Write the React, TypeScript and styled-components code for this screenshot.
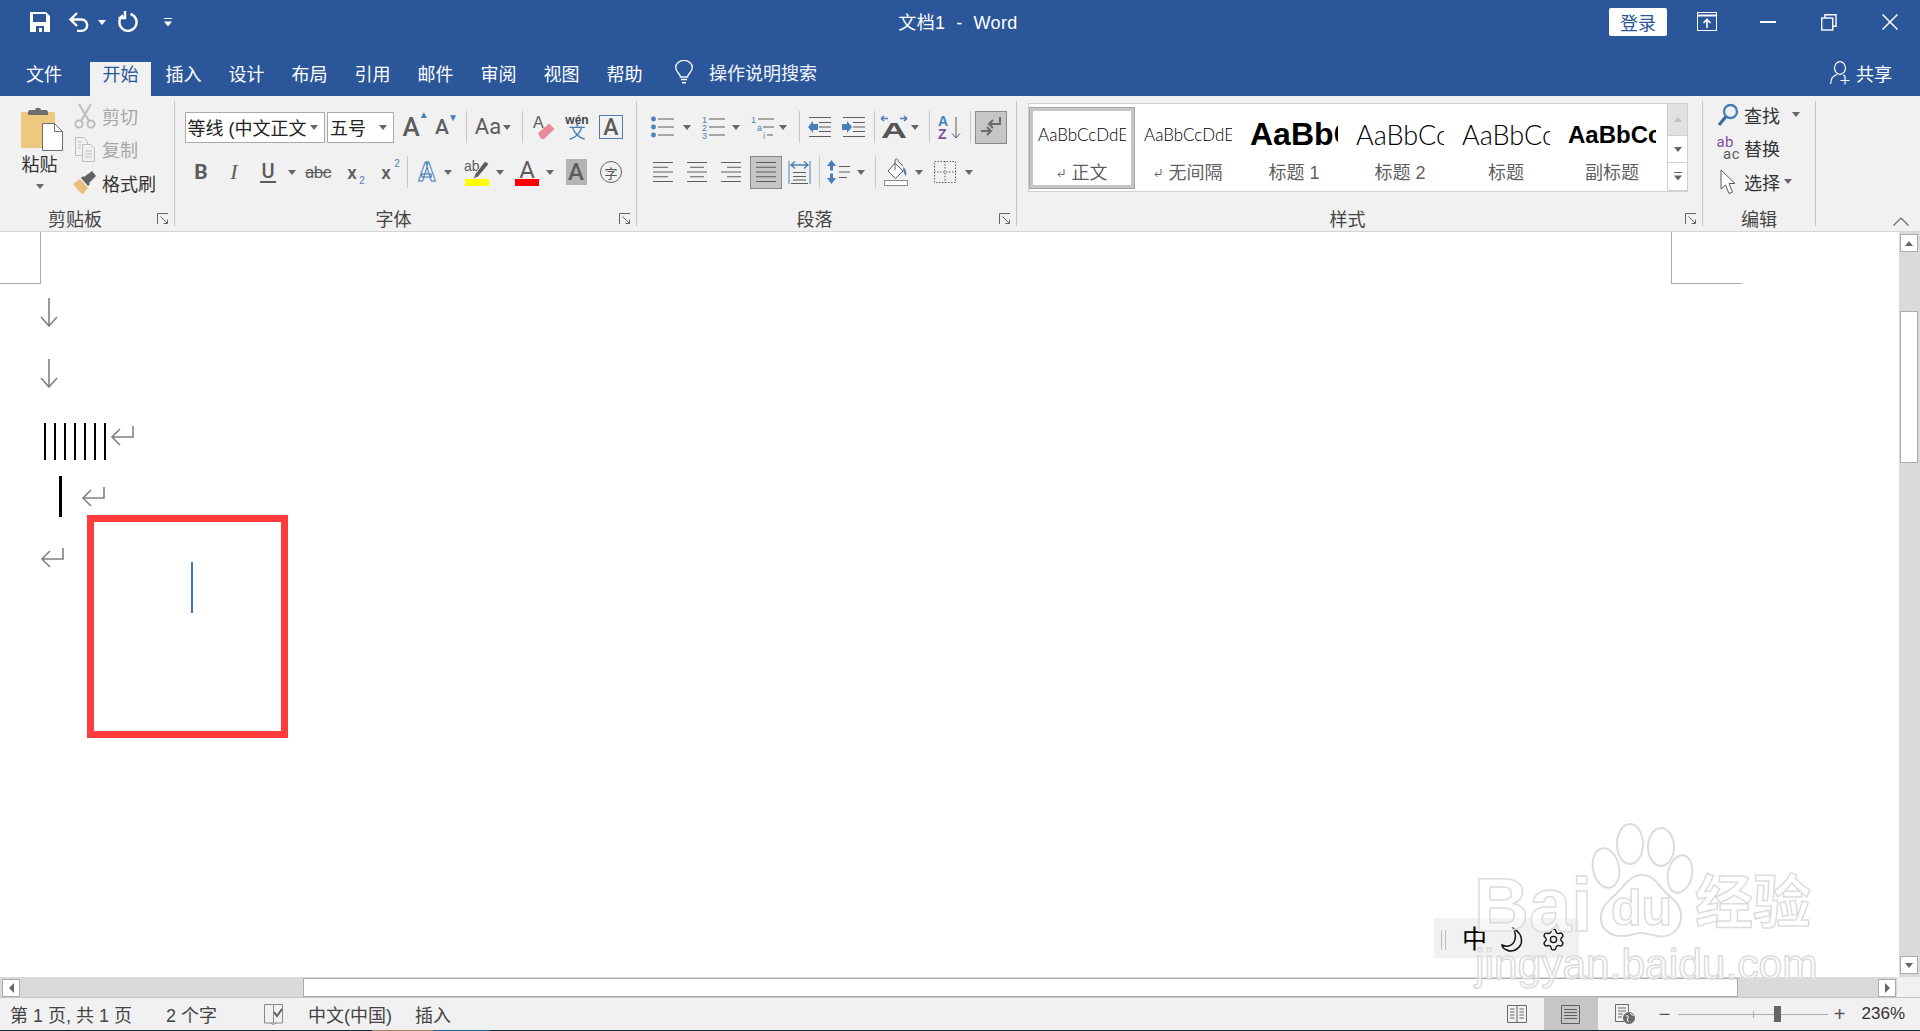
import { ReactNode } from "react";
import styled, { createGlobalStyle } from "styled-components";
import { Settings } from "lucide-react";

const BLUE = "#2b579a";
const ICON_BLUE = "#4a7fb5";
const GREY = "#5c5c5c";
const FACE = "#f1f1f1";

const GlobalStyle = createGlobalStyle`
  html, body { margin: 0; padding: 0; background: #fff; overflow: hidden; }
  * { box-sizing: border-box; }
  body, svg text { font-family: "Liberation Sans", "Noto Sans CJK SC", sans-serif; }
`;

/* ---------- small drawn icons ---------- */

const Caret = ({ color = "#666" }: { color?: string }) => (
  <svg width="8" height="5" viewBox="0 0 8 5"><path d="M0 0h8L4 5z" fill={color} /></svg>
);

const UpCaret = ({ color = "#666" }: { color?: string }) => (
  <svg width="8" height="5" viewBox="0 0 8 5"><path d="M0 5h8L4 0z" fill={color} /></svg>
);

const LeftCaret = () => (
  <svg width="5" height="10" viewBox="0 0 5 10"><path d="M5 0v10L0 5z" fill="#666" /></svg>
);

const RightCaret = () => (
  <svg width="5" height="10" viewBox="0 0 5 10"><path d="M0 0v10l5-5z" fill="#666" /></svg>
);

const MoreCaret = ({ color = "#666" }: { color?: string }) => (
  <svg width="8" height="9" viewBox="0 0 8 9" fill={color}>
    <rect width="8" height="1" />
    <path d="M0 3.5h8L4 8.5z" />
  </svg>
);

const Launcher = () => (
  <svg width="12" height="12" viewBox="0 0 12 12" fill="none" stroke="#666">
    <path d="M.5 11V.5H11" />
    <path d="M3.5 3.5l7 7M6.5 10.5h4v-4" />
  </svg>
);

const ReturnMark = () => (
  <svg width="24" height="20" viewBox="0 0 24 20" fill="none" stroke="#808080" strokeWidth="1.6">
    <path d="M23 0v11H2M10 3l-8 8 8 8" />
  </svg>
);

const DownMark = () => (
  <svg width="18" height="29" viewBox="0 0 18 29" fill="none" stroke="#808080" strokeWidth="1.6">
    <path d="M9 0v28M1 19l8 9 8-9" />
  </svg>
);

const SmallReturn = () => (
  <svg width="8" height="9" viewBox="0 0 8 9" fill="none" stroke="#666">
    <path d="M7 0v5.5H1M3.5 3L1 5.5 3.5 8" />
  </svg>
);

const Paste = () => (
  <svg width="42" height="44" viewBox="0 0 42 44">
    <rect x="0" y="5" width="34" height="36" rx="2" fill="#edc87e" />
    <path d="M7 8V5c0-1 1-2 2-2h5c0-3 6-3 6 0h5c1 0 2 1 2 2v3z" fill="#6e6e6e" />
    <path d="M21.5 16.5h12l8 8v19h-20z" fill="#fff" stroke="#6e6e6e" />
    <path d="M33.5 16.5v8h8" fill="none" stroke="#6e6e6e" />
  </svg>
);

const Scissors = () => (
  <svg width="22" height="26" viewBox="0 0 22 26" fill="none" stroke="#bdbdbd" strokeWidth="2">
    <circle cx="5" cy="21" r="3.6" />
    <circle cx="17" cy="21" r="3.6" />
    <path d="M7 18L17 1M15 18L5 1" />
  </svg>
);

const CopyIcon = () => (
  <svg width="22" height="26" viewBox="0 0 22 26" fill="#f1f1f1" stroke="#bdbdbd">
    <path d="M1.5 1.5h8l4 4v14h-12z" />
    <path d="M8.5 8.5h8l4 4v13h-12z" />
    <path d="M11 15h7M11 18h7M11 21h7M4 6h4M4 9h3M4 12h3" />
  </svg>
);

const Brush = () => (
  <svg width="24" height="24" viewBox="0 0 24 24">
    <path d="M0 13l7-5 8 9-5 6c-3-1-7-6-10-10z" fill="#e8bf78" />
    <path d="M8 7l2-2 7 8-2 2zM11 6l8-6 4 5-7 7z" fill="#5f5f5f" />
  </svg>
);

const Save = () => (
  <svg width="20" height="20" viewBox="0 0 20 20">
    <path fillRule="evenodd" fill="#fff" d="M0 0h16l4 4v16H0zM3 2v8h13V2zM6 14v6h3v-4h3v4h2v-6z" />
  </svg>
);

const Undo = () => (
  <svg width="22" height="22" viewBox="0 0 22 22" fill="none" stroke="#fff" strokeWidth="2.4">
    <path d="M9 2L2.5 8.5 9 15" />
    <path d="M3 8.5h10.5a5.7 5.7 0 0 1 0 11.4H9" />
  </svg>
);

const Redo = () => (
  <svg width="21" height="22" viewBox="0 0 21 22" fill="none" stroke="#fff" strokeWidth="2.4">
    <path d="M6 4.2A8.6 8.6 0 1 0 13.5 3" />
    <path d="M8 0v7H1.5" />
  </svg>
);

const DisplayOptions = () => (
  <svg width="20" height="20" viewBox="0 0 20 20" fill="none" stroke="#fff">
    <rect x=".5" y=".5" width="19" height="18" />
    <path d="M0 3.5h20" strokeWidth="2" />
    <path d="M10 16V8M6.5 11L10 7.5l3.5 3.5" strokeWidth="1.6" />
  </svg>
);

const Minimize = () => (
  <svg width="16" height="2" viewBox="0 0 16 2"><rect width="16" height="2" fill="#fff" /></svg>
);

const Restore = () => (
  <svg width="16" height="17" viewBox="0 0 16 17" fill="none" stroke="#fff" strokeWidth="1.4">
    <rect x=".7" y="4" width="11" height="12" />
    <path d="M4 4V.8h11v11.5h-3.3" />
  </svg>
);

const Close = () => (
  <svg width="16" height="16" viewBox="0 0 16 16" stroke="#fff" strokeWidth="1.5">
    <path d="M.5.5l15 15M15.5.5l-15 15" />
  </svg>
);

const Bulb = () => (
  <svg width="18" height="24" viewBox="0 0 18 24" fill="none" stroke="#fff" strokeWidth="1.4">
    <path d="M5.5 17c0-3-4.8-5-4.8-9.5A8.2 7 0 0 1 17.3 7.5C17.3 12 12.5 14 12.5 17z" />
    <path d="M6 19.5h6M7 22.7h4" />
  </svg>
);

const SharePerson = () => (
  <svg width="20" height="24" viewBox="0 0 20 24" fill="none" stroke="#fff" strokeWidth="1.2">
    <ellipse cx="10" cy="7" rx="5.5" ry="6.3" />
    <path d="M.7 23c0-5 3-8.5 6.5-9.5M13 14l1.5.7M15 14.5v9M10.5 19.5h9" />
  </svg>
);

const ClearFormat = () => (
  <svg width="24" height="26" viewBox="0 0 24 26">
    <text x="1" y="14" fontSize="16" fill={GREY}>A</text>
    <path d="M6 19L17 9.5 22.5 15 12 25H9z" fill="#e98a99" />
  </svg>
);

const HighlightPen = () => (
  <svg width="26" height="22" viewBox="0 0 26 22">
    <text x="0" y="13" fontSize="14" fill={GREY}>ab</text>
    <path d="M9 21l2-5L21 3l4 3-11 13z" fill={GREY} stroke="#f1f1f1" />
  </svg>
);

const Bullets = () => (
  <svg width="24" height="22" viewBox="0 0 24 22">
    <circle cx="2.5" cy="3" r="2.4" fill={ICON_BLUE} />
    <circle cx="2.5" cy="11" r="2.4" fill={ICON_BLUE} />
    <circle cx="2.5" cy="19" r="2.4" fill={ICON_BLUE} />
    <path d="M7 3h16M7 11h16M7 19h16" stroke={GREY} />
  </svg>
);

const Numbered = () => (
  <svg width="24" height="24" viewBox="0 0 24 24">
    <g fill={ICON_BLUE} fontSize="9">
      <text x="0" y="8">1</text>
      <text x="0" y="16">2</text>
      <text x="0" y="24">3</text>
    </g>
    <path d="M7 4h16M7 12h16M7 20h16" stroke={GREY} />
  </svg>
);

const Multilevel = () => (
  <svg width="24" height="24" viewBox="0 0 24 24">
    <g fontSize="9" fill={ICON_BLUE}>
      <text x="0" y="8">1</text>
      <text x="6" y="16">a</text>
      <text x="12" y="24">i</text>
    </g>
    <path d="M7 4h16M12 12h11M16 20h6" stroke={GREY} />
  </svg>
);

const Indent = ({ flip }: { flip?: boolean }) => (
  <svg width="23" height="22" viewBox="0 0 23 22">
    <path d="M1 1.5h22M11 6.5h12M11 11h12M11 15.5h12M1 20.5h22" stroke={GREY} />
    {flip ? (
      <path d="M0 8v6h5v3l5-6-5-6v3z" fill={ICON_BLUE} />
    ) : (
      <path d="M10 8v6H5v3l-5-6 5-6v3z" fill={ICON_BLUE} />
    )}
  </svg>
);

const TextDirection = () => (
  <svg width="28" height="24" viewBox="0 0 28 24">
    <text x="14" y="23" textAnchor="middle" fontSize="22" fontWeight="700" fill="#555" textLength="26" lengthAdjust="spacingAndGlyphs">A</text>
    <path d="M1 3.5h7M1 3.5l3-2.5M1 3.5l3 2.5M27 3.5h-7M27 3.5l-3-2.5M27 3.5l-3 2.5" stroke={ICON_BLUE} strokeWidth="1.6" fill="none" />
  </svg>
);

const Sort = () => (
  <svg width="24" height="26" viewBox="0 0 24 26">
    <text x="0" y="12" fontSize="14" fontWeight="700" fill={ICON_BLUE}>A</text>
    <text x="0" y="25" fontSize="14" fontWeight="700" fill="#7f4ea0">Z</text>
    <path d="M18 3v21M14 19.5l4 4.5 4-4.5" stroke={GREY} fill="none" />
  </svg>
);

const ShowMarks = () => (
  <svg width="22" height="22" viewBox="0 0 22 22" fill="none" stroke="#6a6a6a" strokeWidth="2">
    <path d="M20 1v7H9M13 4L9 8l4 4M1 15h10M7 11l4 4-4 4" />
  </svg>
);

const AlignLines = ({ rows }: { rows: [number, number][] }) => (
  <svg width="22" height="22" viewBox="0 0 22 22" stroke={GREY}>
    {rows.map(([a, b], i) => (
      <path key={i} d={`M${a} ${1.5 + i * 4.75}H${b}`} />
    ))}
  </svg>
);

const Distributed = () => (
  <svg width="23" height="24" viewBox="0 0 23 24">
    <path d="M5 12.5h13M5 16.5h13M5 20h13M3 23.5h17" stroke={GREY} />
    <path d="M1 1v23M22 1v23" stroke={ICON_BLUE} />
    <path d="M3 5h17M7 1.5L3 5l4 3.5M16 1.5L20 5l-4 3.5" stroke={ICON_BLUE} strokeWidth="1.4" fill="none" />
  </svg>
);

const LineSpacing = () => (
  <svg width="24" height="24" viewBox="0 0 24 24">
    <path d="M12 6.5h11M12 12h11M12 17.5h8" stroke={GREY} />
    <path d="M4.5 0L9 6H6v4.5H3V6H0zM4.5 24L9 18H6v-4.5H3V18H0z" fill={ICON_BLUE} />
  </svg>
);

const Shading = () => (
  <svg width="25" height="28" viewBox="0 0 25 28" fill="none">
    <path d="M11 5l8 8-7.5 7.5L4 13z" fill="#fff" stroke={GREY} />
    <path d="M11 12V2c1-2 3-1 3 1l5 5" stroke={GREY} />
    <path d="M19 9c3 2 4 6 3 9-2-2-3-5-3-9z" fill={ICON_BLUE} />
    <rect x=".5" y="22.5" width="23" height="5" fill="#fff" stroke="#8a8a8a" />
  </svg>
);

const Borders = () => (
  <svg width="22" height="22" viewBox="0 0 22 22" fill="none" stroke={GREY} strokeDasharray="1.5 1.5">
    <rect x=".5" y=".5" width="21" height="21" />
    <path d="M11 0v22M0 11h22" />
  </svg>
);

const Magnifier = () => (
  <svg width="22" height="24" viewBox="0 0 22 24" fill="none" stroke={ICON_BLUE}>
    <circle cx="13.5" cy="8.5" r="6.5" strokeWidth="2.4" />
    <path d="M9 13.5L2 22" strokeWidth="3.2" stroke="#3f6b99" />
  </svg>
);

const Pointer = () => (
  <svg width="16" height="26" viewBox="0 0 16 26" fill="#fff" stroke={GREY}>
    <path d="M1 1v19l4.5-4 3.5 8.5 3.5-1.5-3.5-8.5h6z" />
  </svg>
);

const ProofIcon = () => (
  <svg width="20" height="22" viewBox="0 0 20 22" fill="none" stroke="#8a8a8a">
    <path d="M9.5 20H.5V1.5h9zM9.5 1.5h9V20h-9M6.5 20l3 1.5 3-1.5" />
    <path d="M10 9l3 4 5-7" stroke="#5f5f5f" strokeWidth="2" />
  </svg>
);

const ReadView = () => (
  <svg width="20" height="20" viewBox="0 0 20 20" fill="none" stroke="#6a6a6a">
    <path d="M.5 1.5h19v17H.5zM10 1.5v17M3 5h4.5M3 8h4.5M3 11h4.5M3 14h4.5M12.5 5H17M12.5 8H17M12.5 11H17M12.5 14H17" />
  </svg>
);

const PrintView = () => (
  <svg width="19" height="19" viewBox="0 0 19 19" fill="none" stroke="#5f5f5f">
    <path d="M.5.5h18v18H.5zM3 4.5h13M3 7.5h13M3 10.5h13M3 13.5h13" />
  </svg>
);

const WebView = () => (
  <svg width="20" height="20" viewBox="0 0 20 20" fill="none" stroke="#6a6a6a">
    <path d="M9 17.5H.5V.5h13v7M3 4h8M3 7h8M3 10h5M3 13h4" />
    <circle cx="14" cy="14" r="5.5" fill="#6a6a6a" />
    <path d="M11 12c2-1 3 1 2 2s-1 3 1 4M15 9c1 2 4 2 4 3" stroke="#fff" />
  </svg>
);

const Moon = () => (
  <svg width="24" height="26" viewBox="0 0 24 26" fill="none" stroke="#111" strokeWidth="1.5">
    <path d="M12 1c6 3 10 9 8 16-2 5-9 9-14 6-3-1-5-3-5-5 6 3 12 0 13-6 1-4 0-8-2-11z" />
  </svg>
);

const Paw = () => (
  <svg width="120" height="120" viewBox="0 0 120 120" fill="none" stroke="#dcdcdc" strokeWidth="2">
    <ellipse cx="24" cy="46" rx="13" ry="20" transform="rotate(-12 24 46)" />
    <ellipse cx="48" cy="22" rx="13" ry="20" />
    <ellipse cx="79" cy="25" rx="13" ry="19" />
    <ellipse cx="98" cy="52" rx="12" ry="19" transform="rotate(12 98 52)" />
    <path d="M60 53c12 0 16 10 24 18 8 7 16 13 15 25-1 14-13 20-24 18-6-1-10-3-16-3s-11 3-18 3c-11 1-23-6-22-19 0-11 8-16 15-23 8-7 13-19 26-19z" />
  </svg>
);

/* ---------- title bar and tabs ---------- */

const Shell = styled.div`
  display: flex;
  flex-direction: column;
  width: 1920px;
  height: 1031px;
  overflow: hidden;
  background: #fff;
`;

const Header = styled.header`
  background: ${BLUE};
  color: #fff;
`;

const TitleBar = styled.div`
  position: relative;
  display: flex;
  align-items: center;
  height: 50px;
  padding: 0 0 6px 30px;
`;

const Qat = styled.div<{ $ml?: number }>`
  display: flex;
  align-items: center;
  margin-left: ${(p) => p.$ml ?? 0}px;
`;

const DocTitle = styled.div`
  position: absolute;
  left: 0;
  right: 4px;
  top: 13px;
  text-align: center;
  font-size: 18px;
  letter-spacing: 0.4px;
  line-height: 20px;
  white-space: pre;
`;

const WindowTools = styled.div`
  display: flex;
  align-items: center;
  margin-left: auto;
  height: 100%;
`;

const SignIn = styled.div`
  display: flex;
  align-items: center;
  justify-content: center;
  width: 58px;
  height: 28px;
  margin-right: 9px;
  border-radius: 2px;
  background: #fff;
  color: ${BLUE};
  font-size: 18px;
`;

const WindowButton = styled.div`
  display: flex;
  align-items: center;
  justify-content: center;
  width: 61px;
  height: 100%;
`;

const TabBar = styled.nav`
  display: flex;
  align-items: flex-end;
  height: 46px;
  padding-left: 26px;
`;

const Tab = styled.div<{ $active?: boolean; $file?: boolean }>`
  display: flex;
  align-items: center;
  justify-content: center;
  height: 34px;
  padding: ${(p) => (p.$file ? "0" : "0 12.5px")};
  margin-right: ${(p) => (p.$file ? "28px" : "2px")};
  padding-bottom: 12px;
  font-size: 18px;
  background: ${(p) => (p.$active ? FACE : "transparent")};
  color: ${(p) => (p.$active ? BLUE : "#fff")};
`;

const SearchHint = styled.div`
  display: flex;
  align-items: center;
  gap: 16px;
  height: 34px;
  margin-left: 18px;
  padding-bottom: 14px;
  font-size: 18px;
  opacity: 0.95;
`;

const Share = styled.div`
  display: flex;
  align-items: center;
  gap: 6px;
  height: 34px;
  margin-left: auto;
  margin-right: 28px;
  padding-bottom: 12px;
  font-size: 18px;
`;

/* ---------- ribbon ---------- */

const Ribbon = styled.section`
  display: flex;
  flex-shrink: 0;
  height: 136px;
  background: ${FACE};
  border-bottom: 1px solid #d4d4d4;
`;

const Group = styled.div<{ $w: number }>`
  display: flex;
  flex-direction: column;
  flex-shrink: 0;
  width: ${(p) => p.$w}px;
`;

const GroupBody = styled.div`
  flex: 1;
  min-height: 0;
`;

const GroupSep = styled.div`
  flex-shrink: 0;
  width: 1px;
  margin: 5px 0;
  background: #c6c6c6;
`;

const LabelRow = styled.div`
  display: flex;
  align-items: center;
  height: 26px;
  color: #444;
  font-size: 18px;
`;

const GroupLabel = styled.div`
  flex: 1;
  text-align: center;
`;

const LauncherBox = styled.div`
  display: flex;
  justify-content: flex-end;
  width: 24px;
  padding: 2px 5px 0 0;
`;

const GroupFooter = ({ title, launcher = true }: { title: string; launcher?: boolean }) => (
  <LabelRow>
    <GroupLabel>{title}</GroupLabel>
    {launcher && (
      <LauncherBox>
        <Launcher />
      </LauncherBox>
    )}
  </LabelRow>
);

const ClipboardBody = styled(GroupBody)`
  display: flex;
`;

const PasteColumn = styled.div`
  display: flex;
  flex-direction: column;
  align-items: center;
  width: 79px;
  padding: 11px 0 0 4px;
  color: #333;
  font-size: 18px;
  line-height: 20px;
`;

const PasteText = styled.div`
  margin: 4px 4px 9px 0;
`;

const PasteCaret = styled.div`
  display: flex;
  margin-right: 4px;
`;

const SmallList = styled.div`
  display: flex;
  flex-direction: column;
  padding-top: 3px;
`;

const SmallItem = styled.div<{ $disabled?: boolean }>`
  display: flex;
  align-items: center;
  gap: 5px;
  height: 33.5px;
  font-size: 18px;
  color: ${(p) => (p.$disabled ? "#a6a6a6" : "#333")};
`;

const SmallIcon = styled.div`
  display: flex;
  justify-content: center;
  width: 24px;
  margin-left: -6px;
`;

const Rows = styled.div`
  display: flex;
  flex-direction: column;
  gap: 13px;
  padding-top: 15px;
`;

const RowEl = styled.div`
  display: flex;
  height: 32px;
`;

const Slot = styled.div<{ $w: number; $ml: number }>`
  display: flex;
  align-items: center;
  justify-content: center;
  flex-shrink: 0;
  width: ${(p) => p.$w}px;
  margin-left: ${(p) => p.$ml}px;
`;

type Item = { at: number; w: number; node: ReactNode };

// items are given by their centre on the window, margins are worked out from that
const ToolRow = ({ from, items }: { from: number; items: Item[] }) => {
  let x = from;
  return (
    <RowEl>
      {items.map((it, i) => {
        const ml = it.at - it.w / 2 - x;
        x = it.at + it.w / 2;
        return (
          <Slot key={i} $w={it.w} $ml={ml}>
            {it.node}
          </Slot>
        );
      })}
    </RowEl>
  );
};

const Sep = styled.div`
  width: 1px;
  height: 32px;
  background: #c6c6c6;
`;

const Combo = styled.div`
  display: flex;
  align-items: center;
  justify-content: space-between;
  width: 100%;
  height: 31px;
  padding: 0 6px 0 2px;
  background: #fff;
  border: 1px solid #ababab;
  color: #222;
  font-size: 18px;
  white-space: nowrap;
  overflow: hidden;
`;

const Glyph = styled.span<{ $size: number; $color?: string; $weight?: number; $serif?: boolean }>`
  font-family: ${(p) => (p.$serif ? '"Liberation Serif"' : "Roboto")}, "Noto Sans CJK SC", sans-serif;
  font-size: ${(p) => p.$size}px;
  font-weight: ${(p) => p.$weight ?? 400};
  font-style: ${(p) => (p.$serif ? "italic" : "normal")};
  color: ${(p) => p.$color ?? GREY};
  line-height: 1;
`;

const Under = styled(Glyph)`
  border-bottom: 2px solid ${GREY};
  padding: 0 1px;
`;

const Strike = styled(Glyph)`
  text-decoration: line-through;
  letter-spacing: -0.5px;
`;

const Indexed = styled.span`
  position: relative;
  display: inline-flex;
`;

const Sign = styled.span<{ $up?: boolean; $color?: string }>`
  position: absolute;
  right: ${(p) => (p.$up ? "-9px" : "-8px")};
  top: ${(p) => (p.$up ? "-4px" : "auto")};
  bottom: ${(p) => (p.$up ? "auto" : "-4px")};
  color: ${(p) => p.$color ?? ICON_BLUE};
  font-size: 10px;
  line-height: 1;
`;

const StackIcon = styled.span`
  display: flex;
  flex-direction: column;
  align-items: center;
  line-height: 1;
`;

const Wen = styled.span`
  color: #444;
  font-size: 12px;
  font-weight: 700;
  margin-bottom: -2px;
`;

const WenChar = styled.span`
  color: ${ICON_BLUE};
  font-size: 17px;
`;

const BoxedA = styled.span`
  display: flex;
  align-items: center;
  justify-content: center;
  width: 24px;
  height: 24px;
  border: 1px solid ${ICON_BLUE};
`;

const OutlineA = styled(Glyph)`
  color: #fff;
  -webkit-text-stroke: 1px ${ICON_BLUE};
  text-shadow: 0 0 3px #b8d2ec;
  font-weight: 700;
`;

const SwatchIcon = styled.span`
  display: flex;
  flex-direction: column;
  align-items: center;
  width: 24px;
`;

const Swatch = styled.span<{ $color: string }>`
  width: 24px;
  height: 7px;
  margin-top: -1px;
  background: ${(p) => p.$color};
`;

const PenMark = styled.span`
  display: flex;
  justify-content: center;
  height: 22px;
  line-height: 22px;
`;

const ShadedA = styled.span`
  display: flex;
  align-items: center;
  justify-content: center;
  width: 21px;
  height: 26px;
  background: #b4b4b4;
`;

const CircleChar = styled.span`
  display: flex;
  align-items: center;
  justify-content: center;
  width: 22px;
  height: 22px;
  border: 1.5px solid #666;
  border-radius: 50%;
  color: #555;
  font-size: 13px;
`;

const PressedTool = styled.div<{ $w: number; $h: number }>`
  display: flex;
  align-items: center;
  justify-content: center;
  width: ${(p) => p.$w}px;
  height: ${(p) => p.$h}px;
  background: #c6c6c6;
  border: 1px solid #8a8a8a;
`;

const Gallery = styled.div`
  display: flex;
  width: 660px;
  height: 89px;
  margin: 7px 0 0 11px;
  background: #fff;
  border: 1px solid #d0d0d0;
  border-right: 0;
`;

const GalleryItems = styled.div`
  display: flex;
  flex: 1;
  padding-top: 3px;
`;

const StyleItem = styled.div<{ $selected?: boolean }>`
  display: flex;
  flex-direction: column;
  align-items: center;
  flex-shrink: 0;
  width: 106px;
  height: 82px;
  border: ${(p) => (p.$selected ? "4px solid #c6c6c6" : "4px solid transparent")};
  outline: ${(p) => (p.$selected ? "1px solid #a6a6a6" : "none")};
  outline-offset: -1px;
`;

const Sample = styled.div<{ $size: number; $bold?: boolean }>`
  display: flex;
  align-items: center;
  justify-content: flex-start;
  width: 88px;
  height: 50px;
  margin-top: -1px;
  overflow: hidden;
  white-space: nowrap;
  color: #000;
  font-family: ${(p) => (p.$bold ? '"Liberation Sans"' : "Lato")}, sans-serif;
  font-size: ${(p) => p.$size}px;
  font-weight: ${(p) => (p.$bold ? 700 : 300)};
`;

const StyleName = styled.div`
  display: flex;
  align-items: center;
  gap: 7px;
  color: #5f5f5f;
  font-size: 18px;
  line-height: 24px;
  margin-top: 2px;
`;

const GalleryScroll = styled.div`
  display: flex;
  flex-direction: column;
  width: 21px;
  border: 1px solid #d0d0d0;
  border-width: 0 1px 0 1px;
`;

const GalleryArrow = styled.div<{ $h: number; $off?: boolean }>`
  display: flex;
  align-items: center;
  justify-content: center;
  height: ${(p) => p.$h}px;
  background: ${(p) => (p.$off ? "#e1e1e1" : "#fff")};
  border-bottom: 1px solid #d0d0d0;
`;

const EditList = styled.div`
  display: flex;
  flex-direction: column;
  padding-top: 2px;
`;

const EditItem = styled.div`
  display: flex;
  align-items: center;
  height: 33.5px;
  padding-left: 12px;
  color: #333;
  font-size: 18px;
`;

const EditIcon = styled.div`
  display: flex;
  align-items: center;
  justify-content: center;
  width: 26px;
  margin-right: 3px;
`;

const EditCaret = styled.div<{ $ml: number }>`
  display: flex;
  margin-left: ${(p) => p.$ml}px;
`;

const SwapText = styled.span`
  display: flex;
  flex-direction: column;
  align-items: flex-end;
  width: 24px;
  font-family: Roboto, sans-serif;
  font-size: 15px;
  line-height: 12px;
`;

const SwapTop = styled.span`
  color: #7f4ea0;
  letter-spacing: 0.5px;
  margin-right: 6px;
`;

const SwapBottom = styled.span`
  color: ${GREY};
  letter-spacing: 0.5px;
`;

const Collapse = styled.div`
  display: flex;
  align-self: flex-end;
  margin-left: auto;
  padding: 0 11px 5px 0;
`;

/* ---------- document ---------- */

const Workspace = styled.div`
  display: flex;
  flex: 1;
  min-height: 0;
`;

const Page = styled.main`
  position: relative;
  flex: 1;
`;

const Corners = styled.div`
  display: flex;
  justify-content: space-between;
  height: 52px;
  padding-right: 157px;
`;

const CornerLeft = styled.div`
  width: 41px;
  border-right: 1px solid #ababab;
  border-bottom: 1px solid #ababab;
`;

const CornerRight = styled.div`
  width: 71px;
  border-left: 1px solid #ababab;
  border-bottom: 1px solid #ababab;
`;

const Lines = styled.div`
  display: flex;
  flex-direction: column;
  padding: 14px 0 0 40px;
`;

const Line = styled.div<{ $h: number; $indent?: number }>`
  display: flex;
  align-items: flex-start;
  height: ${(p) => p.$h}px;
  padding-left: ${(p) => p.$indent ?? 0}px;
`;

const BarCode = styled.div`
  display: flex;
  gap: 8px;
  margin-right: 4px;
`;

const Bar = styled.div<{ $w: number; $h: number }>`
  width: ${(p) => p.$w}px;
  height: ${(p) => p.$h}px;
  background: #000;
`;

const MarkOffset = styled.div<{ $top: number; $left?: number }>`
  display: flex;
  margin-top: ${(p) => p.$top}px;
  margin-left: ${(p) => p.$left ?? 0}px;
`;

const RedBox = styled.div`
  position: absolute;
  left: 87px;
  top: 283px;
  width: 201px;
  height: 223px;
  border: 7px solid #ff3b3b;
`;

const Cursor = styled.div`
  position: absolute;
  left: 97px;
  top: 40px;
  width: 2px;
  height: 51px;
  background: #4472c4;
`;

const ImeBar = styled.div`
  position: absolute;
  left: 1434px;
  top: 686px;
  display: flex;
  align-items: center;
  width: 145px;
  height: 40px;
  padding: 3px 0 0 7px;
  background: rgba(238, 238, 238, 0.8);
`;

const ImeGrip = styled.div`
  width: 5px;
  height: 20px;
  border: 1px solid #bbb;
  border-width: 0 1px;
  margin-right: 16px;
`;

const ImeChar = styled.span`
  margin-right: 14px;
  color: #000;
  font-size: 25px;
  line-height: 1;
`;

const ImeIcon = styled.div<{ $ml?: number }>`
  display: flex;
  margin-left: ${(p) => p.$ml ?? 0}px;
`;

const Watermark = styled.div`
  position: absolute;
  left: 1470px;
  top: 590px;
  width: 360px;
  height: 170px;
  pointer-events: none;
  color: rgba(255, 255, 255, 0.45);
  -webkit-text-stroke: 1.5px #dcdcdc;
`;

const Mark = styled.span<{ $x: number; $y: number; $size: number; $bold?: boolean }>`
  position: absolute;
  left: ${(p) => p.$x}px;
  top: ${(p) => p.$y}px;
  font-size: ${(p) => p.$size}px;
  font-weight: ${(p) => (p.$bold ? 700 : 400)};
  line-height: 1;
  white-space: nowrap;
`;

const PawBox = styled.div`
  position: absolute;
  left: 112px;
  top: 0;
`;

/* ---------- scrollbars ---------- */

const VScroll = styled.aside`
  display: flex;
  flex-direction: column;
  flex-shrink: 0;
  width: 21px;
  padding: 2px 1px 3px 1px;
  background: #dadada;
`;

const ScrollBtn = styled.div`
  display: flex;
  align-items: center;
  justify-content: center;
  flex-shrink: 0;
  width: 18px;
  height: 18px;
  background: #fff;
  border: 1px solid #ababab;
`;

const VThumb = styled.div`
  width: 18px;
  height: 152px;
  margin-top: 59px;
  margin-bottom: auto;
  background: #fff;
  border: 1px solid #ababab;
`;

const HRow = styled.div`
  display: flex;
  flex-shrink: 0;
  height: 20px;
  background: ${FACE};
`;

const HTrack = styled.div`
  display: flex;
  align-items: center;
  width: 1897px;
  padding: 1px 1px 0 2px;
  background: #dadada;
`;

const HThumb = styled.div`
  width: 1436px;
  height: 19px;
  margin: 0 140px 0 283px;
  background: #fff;
  border: 1px solid #ababab;
`;

/* ---------- status bar ---------- */

const Status = styled.footer`
  display: flex;
  align-items: center;
  flex-shrink: 0;
  height: 33px;
  padding-left: 10px;
  border-top: 1px solid #c6c6c6;
  background: ${FACE};
  color: #444;
  font-size: 18px;
`;

const StatusItem = styled.div<{ $w: number }>`
  display: flex;
  align-items: center;
  width: ${(p) => p.$w}px;
  white-space: pre;
`;

const StatusRight = styled.div`
  display: flex;
  align-items: center;
  margin-left: auto;
  height: 100%;
`;

const ViewBtn = styled.div<{ $w: number; $active?: boolean }>`
  display: flex;
  align-items: center;
  justify-content: center;
  width: ${(p) => p.$w}px;
  height: 100%;
  background: ${(p) => (p.$active ? "#c6c6c6" : "transparent")};
`;

const ZoomBtn = styled.div<{ $w: number }>`
  display: flex;
  align-items: center;
  justify-content: center;
  width: ${(p) => p.$w}px;
  color: #555;
  font-size: 20px;
`;

const ZoomTrack = styled.div`
  position: relative;
  width: 150px;
  height: 1px;
  background: #ababab;
`;

const ZoomTick = styled.div`
  position: absolute;
  left: 75px;
  top: -3px;
  width: 1px;
  height: 7px;
  background: #ababab;
`;

const ZoomThumb = styled.div`
  position: absolute;
  left: 96px;
  top: -8px;
  width: 7px;
  height: 16px;
  background: #666;
`;

const ZoomText = styled.div`
  margin: 0 15px 0 10px;
  color: #333;
  font-size: 17px;
`;

const TaskEdge = styled.div`
  display: flex;
  flex-shrink: 0;
  height: 1px;
  background: #0e2a3f;
`;

const TaskTile = styled.div<{ $w: number; $ml?: number; $color: string }>`
  width: ${(p) => p.$w}px;
  margin-left: ${(p) => p.$ml ?? 0}px;
  background: ${(p) => p.$color};
`;

const tabs = ["插入", "设计", "布局", "引用", "邮件", "审阅", "视图", "帮助"];

const fontRow1: Item[] = [
  { at: 254.5, w: 140, node: <Combo>等线 (中文正文<Caret /></Combo> },
  { at: 360.5, w: 67, node: <Combo>五号<Caret /></Combo> },
  {
    at: 411,
    w: 22,
    node: (
      <Indexed>
        <Glyph $size={26} $weight={500}>A</Glyph>
        <Sign $up>▲</Sign>
      </Indexed>
    ),
  },
  {
    at: 442,
    w: 18,
    node: (
      <Indexed>
        <Glyph $size={21} $weight={500}>A</Glyph>
        <Sign $up>▼</Sign>
      </Indexed>
    ),
  },
  { at: 466.5, w: 1, node: <Sep /> },
  { at: 488, w: 28, node: <Glyph $size={22}>Aa</Glyph> },
  { at: 507, w: 8, node: <Caret /> },
  { at: 522.5, w: 1, node: <Sep /> },
  { at: 544, w: 24, node: <ClearFormat /> },
  {
    at: 577,
    w: 24,
    node: (
      <StackIcon>
        <Wen>wén</Wen>
        <WenChar>文</WenChar>
      </StackIcon>
    ),
  },
  { at: 611, w: 24, node: <BoxedA><Glyph $size={23} $weight={500}>A</Glyph></BoxedA> },
];

const fontRow2: Item[] = [
  { at: 201, w: 16, node: <Glyph $size={21} $weight={700}>B</Glyph> },
  { at: 234, w: 14, node: <Glyph $size={22} $serif>I</Glyph> },
  { at: 268, w: 18, node: <Under $size={20} $weight={500}>U</Under> },
  { at: 292, w: 8, node: <Caret /> },
  { at: 318, w: 26, node: <Strike $size={17}>abc</Strike> },
  {
    at: 352,
    w: 14,
    node: (
      <Indexed>
        <Glyph $size={19} $weight={500}>x</Glyph>
        <Sign>2</Sign>
      </Indexed>
    ),
  },
  {
    at: 386,
    w: 14,
    node: (
      <Indexed>
        <Glyph $size={19} $weight={500}>x</Glyph>
        <Sign $up>2</Sign>
      </Indexed>
    ),
  },
  { at: 407.5, w: 1, node: <Sep /> },
  { at: 427, w: 22, node: <OutlineA $size={25}>A</OutlineA> },
  { at: 448, w: 8, node: <Caret /> },
  {
    at: 477,
    w: 26,
    node: (
      <SwatchIcon>
        <PenMark>
          <HighlightPen />
        </PenMark>
        <Swatch $color="#ffff00" />
      </SwatchIcon>
    ),
  },
  { at: 500, w: 8, node: <Caret /> },
  {
    at: 527,
    w: 24,
    node: (
      <SwatchIcon>
        <PenMark>
          <Glyph $size={24}>A</Glyph>
        </PenMark>
        <Swatch $color="#ff0000" />
      </SwatchIcon>
    ),
  },
  { at: 550, w: 8, node: <Caret /> },
  { at: 576, w: 21, node: <ShadedA><Glyph $size={24} $weight={500}>A</Glyph></ShadedA> },
  { at: 611, w: 22, node: <CircleChar>字</CircleChar> },
];

const paraRow1: Item[] = [
  { at: 663, w: 24, node: <Bullets /> },
  { at: 687, w: 8, node: <Caret /> },
  { at: 714, w: 24, node: <Numbered /> },
  { at: 736, w: 8, node: <Caret /> },
  { at: 763, w: 24, node: <Multilevel /> },
  { at: 783, w: 8, node: <Caret /> },
  { at: 799.5, w: 1, node: <Sep /> },
  { at: 819, w: 23, node: <Indent /> },
  { at: 853, w: 23, node: <Indent flip /> },
  { at: 874.5, w: 1, node: <Sep /> },
  { at: 894, w: 28, node: <TextDirection /> },
  { at: 915, w: 8, node: <Caret /> },
  { at: 929.5, w: 1, node: <Sep /> },
  { at: 950, w: 24, node: <Sort /> },
  { at: 970.5, w: 1, node: <Sep /> },
  { at: 991, w: 32, node: <PressedTool $w={32} $h={33}><ShowMarks /></PressedTool> },
];

const paraRow2: Item[] = [
  { at: 663, w: 22, node: <AlignLines rows={[[1, 21], [1, 16], [1, 21], [1, 16], [1, 21]]} /> },
  { at: 697, w: 22, node: <AlignLines rows={[[1, 21], [4, 18], [1, 21], [4, 18], [1, 21]]} /> },
  { at: 731, w: 22, node: <AlignLines rows={[[1, 21], [7, 21], [1, 21], [7, 21], [1, 21]]} /> },
  {
    at: 765.5,
    w: 32,
    node: (
      <PressedTool $w={32} $h={33}>
        <AlignLines rows={[[1, 21], [1, 21], [1, 21], [1, 21], [1, 21]]} />
      </PressedTool>
    ),
  },
  { at: 799, w: 23, node: <Distributed /> },
  { at: 819.5, w: 1, node: <Sep /> },
  { at: 839, w: 24, node: <LineSpacing /> },
  { at: 861, w: 8, node: <Caret /> },
  { at: 875.5, w: 1, node: <Sep /> },
  { at: 896, w: 25, node: <Shading /> },
  { at: 919, w: 8, node: <Caret /> },
  { at: 945, w: 22, node: <Borders /> },
  { at: 969, w: 8, node: <Caret /> },
];

const styleItems = [
  { sample: "AaBbCcDdE", size: 17, name: "正文", ret: true, selected: true },
  { sample: "AaBbCcDdE", size: 17, name: "无间隔", ret: true },
  { sample: "AaBbCc", size: 32, bold: true, name: "标题 1" },
  { sample: "AaBbCc", size: 27, name: "标题 2" },
  { sample: "AaBbCc", size: 27, name: "标题" },
  { sample: "AaBbCc", size: 24, bold: true, name: "副标题" },
];

export default function App() {
  return (
    <Shell>
      <GlobalStyle />
      <Header>
        <TitleBar>
          <Qat><Save /></Qat>
          <Qat $ml={18}><Undo /></Qat>
          <Qat $ml={8}><Caret color="#fff" /></Qat>
          <Qat $ml={11}><Redo /></Qat>
          <Qat $ml={26}><MoreCaret color="#fff" /></Qat>
          <DocTitle>文档1  -  Word</DocTitle>
          <WindowTools>
            <SignIn>登录</SignIn>
            <WindowButton><DisplayOptions /></WindowButton>
            <WindowButton><Minimize /></WindowButton>
            <WindowButton><Restore /></WindowButton>
            <WindowButton><Close /></WindowButton>
          </WindowTools>
        </TitleBar>
        <TabBar>
          <Tab $file>文件</Tab>
          <Tab $active>开始</Tab>
          {tabs.map((t) => (
            <Tab key={t}>{t}</Tab>
          ))}
          <SearchHint>
            <Bulb />
            操作说明搜索
          </SearchHint>
          <Share>
            <SharePerson />
            共享
          </Share>
        </TabBar>
      </Header>

      <Ribbon>
        <Group $w={174}>
          <ClipboardBody>
            <PasteColumn>
              <Paste />
              <PasteText>粘贴</PasteText>
              <PasteCaret><Caret /></PasteCaret>
            </PasteColumn>
            <SmallList>
              <SmallItem $disabled><SmallIcon><Scissors /></SmallIcon>剪切</SmallItem>
              <SmallItem $disabled><SmallIcon><CopyIcon /></SmallIcon>复制</SmallItem>
              <SmallItem><SmallIcon><Brush /></SmallIcon>格式刷</SmallItem>
            </SmallList>
          </ClipboardBody>
          <GroupFooter title="剪贴板" />
        </Group>
        <GroupSep />
        <Group $w={461}>
          <GroupBody>
            <Rows>
              <ToolRow from={175} items={fontRow1} />
              <ToolRow from={175} items={fontRow2} />
            </Rows>
          </GroupBody>
          <GroupFooter title="字体" />
        </Group>
        <GroupSep />
        <Group $w={379}>
          <GroupBody>
            <Rows>
              <ToolRow from={637} items={paraRow1} />
              <ToolRow from={637} items={paraRow2} />
            </Rows>
          </GroupBody>
          <GroupFooter title="段落" />
        </Group>
        <GroupSep />
        <Group $w={685}>
          <GroupBody>
            <Gallery>
              <GalleryItems>
                {styleItems.map((s) => (
                  <StyleItem key={s.name} $selected={s.selected}>
                    <Sample $size={s.size} $bold={s.bold}>{s.sample}</Sample>
                    <StyleName>
                      {s.ret && <SmallReturn />}
                      {s.name}
                    </StyleName>
                  </StyleItem>
                ))}
              </GalleryItems>
              <GalleryScroll>
                <GalleryArrow $h={32} $off><UpCaret color="#c0c0c0" /></GalleryArrow>
                <GalleryArrow $h={27}><Caret /></GalleryArrow>
                <GalleryArrow $h={28}><MoreCaret /></GalleryArrow>
              </GalleryScroll>
            </Gallery>
          </GroupBody>
          <GroupFooter title="样式" />
        </Group>
        <GroupSep />
        <Group $w={112}>
          <GroupBody>
            <EditList>
              <EditItem>
                <EditIcon><Magnifier /></EditIcon>查找
                <EditCaret $ml={12}><Caret /></EditCaret>
              </EditItem>
              <EditItem>
                <EditIcon>
                  <SwapText>
                    <SwapTop>ab</SwapTop>
                    <SwapBottom>ac</SwapBottom>
                  </SwapText>
                </EditIcon>
                替换
              </EditItem>
              <EditItem>
                <EditIcon><Pointer /></EditIcon>选择
                <EditCaret $ml={4}><Caret /></EditCaret>
              </EditItem>
            </EditList>
          </GroupBody>
          <GroupFooter title="编辑" launcher={false} />
        </Group>
        <GroupSep />
        <Collapse>
          <svg width="16" height="9" viewBox="0 0 16 9" fill="none" stroke="#666" strokeWidth="1.2">
            <path d="M.5 8.5L8 1l7.500 7.500" />
          </svg>
        </Collapse>
      </Ribbon>

      <Workspace>
        <Page>
          <Corners>
            <CornerLeft />
            <CornerRight />
          </Corners>
          <Lines>
            <Line $h={61}><DownMark /></Line>
            <Line $h={64}><DownMark /></Line>
            <Line $h={53} $indent={4}>
              <BarCode>
                {[0, 1, 2, 3, 4, 5, 6].map((i) => (
                  <Bar key={i} $w={2} $h={37} />
                ))}
              </BarCode>
              <MarkOffset $top={3}><ReturnMark /></MarkOffset>
            </Line>
            <Line $h={72} $indent={19}>
              <Bar $w={3} $h={41} />
              <MarkOffset $top={11} $left={19}><ReturnMark /></MarkOffset>
            </Line>
            <Line $h={30}><ReturnMark /></Line>
          </Lines>
          <RedBox>
            <Cursor />
          </RedBox>
          <ImeBar>
            <ImeGrip />
            <ImeChar>中</ImeChar>
            <ImeIcon><Moon /></ImeIcon>
            <ImeIcon $ml={16}><Settings size={25} strokeWidth={1.3} color="#111" /></ImeIcon>
          </ImeBar>
          <Watermark>
            <PawBox><Paw /></PawBox>
            <Mark $x={4} $y={45} $size={76} $bold>Bai</Mark>
            <Mark $x={141} $y={61} $size={50} $bold>du</Mark>
            <Mark $x={225} $y={52} $size={58} $bold>经验</Mark>
            <Mark $x={5} $y={122} $size={42.5}>jingyan.baidu.com</Mark>
          </Watermark>
        </Page>
        <VScroll>
          <ScrollBtn><UpCaret /></ScrollBtn>
          <VThumb />
          <ScrollBtn><Caret /></ScrollBtn>
        </VScroll>
      </Workspace>

      <HRow>
        <HTrack>
          <ScrollBtn><LeftCaret /></ScrollBtn>
          <HThumb />
          <ScrollBtn><RightCaret /></ScrollBtn>
        </HTrack>
      </HRow>

      <Status>
        <StatusItem $w={156}>第 1 页, 共 1 页</StatusItem>
        <StatusItem $w={98}>2 个字</StatusItem>
        <StatusItem $w={44}><ProofIcon /></StatusItem>
        <StatusItem $w={107}>中文(中国)</StatusItem>
        <StatusItem $w={50}>插入</StatusItem>
        <StatusRight>
          <ViewBtn $w={22}><ReadView /></ViewBtn>
          <ViewBtn $w={16} />
          <ViewBtn $w={54} $active><PrintView /></ViewBtn>
          <ViewBtn $w={54}><WebView /></ViewBtn>
          <ZoomBtn $w={26}>−</ZoomBtn>
          <ZoomTrack>
            <ZoomTick />
            <ZoomThumb />
          </ZoomTrack>
          <ZoomBtn $w={24}>+</ZoomBtn>
          <ZoomText>236%</ZoomText>
        </StatusRight>
      </Status>
      <TaskEdge>
        <TaskTile $w={61} $ml={372} $color="#a5805f" />
        <TaskTile $w={57} $color="#14639f" />
      </TaskEdge>
    </Shell>
  );
}
